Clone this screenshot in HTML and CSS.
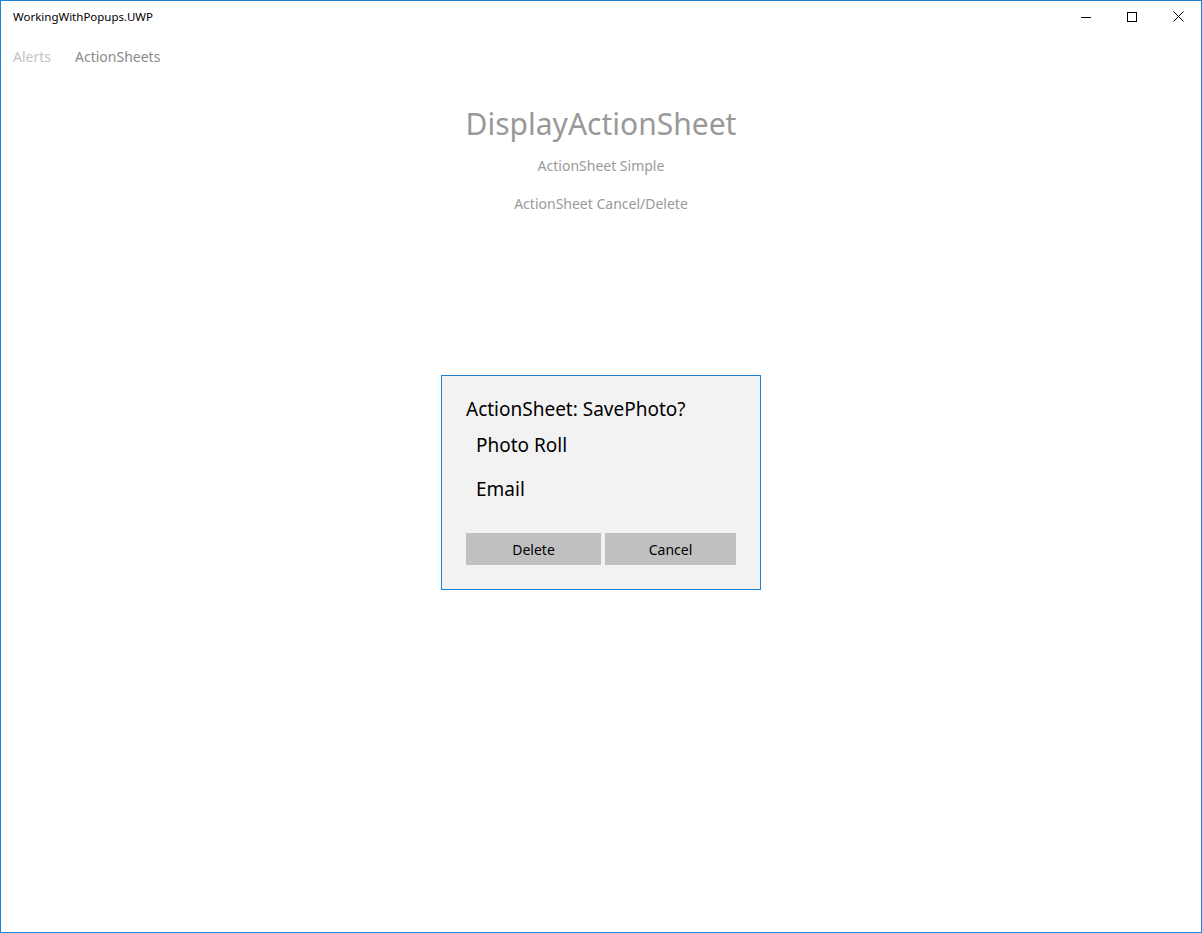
FILE: index.html
```html
<!DOCTYPE html>
<html>
<head>
<meta charset="utf-8">
<link rel="stylesheet" href="styles.css">
</head>
<body>
<div class="window">
  <div class="titlebar">
    <div class="app-title">WorkingWithPopups.UWP</div>
    <div class="caption-buttons">
      <div class="cap-btn">
        <svg width="10" height="10" viewBox="0 0 10 10"><path d="M0 5.5H10" stroke="#000" stroke-width="1"/></svg>
      </div>
      <div class="cap-btn">
        <svg width="10" height="10" viewBox="0 0 10 10"><rect x="0.5" y="0.5" width="9" height="9" fill="none" stroke="#000" stroke-width="1"/></svg>
      </div>
      <div class="cap-btn">
        <svg width="11" height="11" viewBox="0 0 11 11"><path d="M0.5 0.5L10.5 10.5M10.5 0.5L0.5 10.5" stroke="#000" stroke-width="1"/></svg>
      </div>
    </div>
  </div>
  <div class="tabs">
    <div class="tab tab-inactive">Alerts</div>
    <div class="tab tab-active">ActionSheets</div>
  </div>
  <div class="content">
    <div class="heading">DisplayActionSheet</div>
    <div class="link-btn">ActionSheet Simple</div>
    <div class="link-btn">ActionSheet Cancel/Delete</div>
  </div>
  <div class="overlay">
    <div class="dialog">
      <div class="dialog-title">ActionSheet: SavePhoto?</div>
      <div class="option">Photo Roll</div>
      <div class="option">Email</div>
      <div class="dialog-buttons">
        <div class="dlg-btn btn-delete">Delete</div>
        <div class="dlg-btn btn-cancel">Cancel</div>
      </div>
    </div>
  </div>
</div>
</body>
</html>
```

FILE: styles.css
```css
html, body {
  margin: 0;
  padding: 0;
  background: #fff;
}
body {
  font-family: "Noto Sans", "Open Sans", sans-serif;
}
.window {
  position: relative;
  width: 1202px;
  height: 933px;
  box-sizing: border-box;
  border: 1px solid #1a84d8;
  background: #fff;
  display: flex;
  flex-direction: column;
}
.titlebar {
  height: 31px;
  display: flex;
  align-items: center;
  justify-content: space-between;
}
.app-title {
  padding-left: 12px;
  font-size: 11.5px;
  color: #000;
  padding-bottom: 1px;
}
.caption-buttons {
  display: flex;
  height: 31px;
}
.cap-btn {
  width: 46px;
  height: 31px;
  display: flex;
  align-items: center;
  justify-content: center;
}
.tabs {
  display: flex;
  gap: 24px;
  padding-left: 12px;
  height: 48px;
  align-items: center;
}
.tab {
  font-size: 14px;
}
.tab-inactive { color: #c2c2c2; }
.tab-active { color: #8a8a8a; }
.content {
  display: flex;
  flex-direction: column;
  align-items: center;
  padding-top: 22px;
}
.heading {
  font-size: 30px;
  color: #999;
  line-height: 44px;
}
.link-btn {
  font-size: 14px;
  color: #9a9a9a;
  line-height: 20px;
  margin-top: 10px;
}
.link-btn + .link-btn {
  margin-top: 18px;
}
.overlay {
  position: absolute;
  left: 0;
  right: 0;
  top: 31px;
  bottom: 0;
  display: flex;
  align-items: center;
  justify-content: center;
}
.dialog {
  width: 320px;
  height: 215px;
  box-sizing: border-box;
  border: 1px solid #1a84d8;
  background: #f2f2f2;
  padding: 20px 24px 0 24px;
}
.dialog-title {
  font-size: 19px;
  color: #000;
  line-height: 26px;
}
.option {
  font-size: 19px;
  color: #000;
  line-height: 26px;
  padding-left: 10px;
  margin-top: 10px;
}
.option + .option {
  margin-top: 18px;
}
.dialog-buttons {
  display: flex;
  gap: 4px;
  margin-top: 31px;
}
.dlg-btn {
  height: 32px;
  box-sizing: border-box;
  padding-top: 2px;
  background: #c0c0c0;
  display: flex;
  align-items: center;
  justify-content: center;
  font-size: 14px;
  color: #000;
}
.btn-delete { width: 135px; }
.btn-cancel { width: 131px; }
```
